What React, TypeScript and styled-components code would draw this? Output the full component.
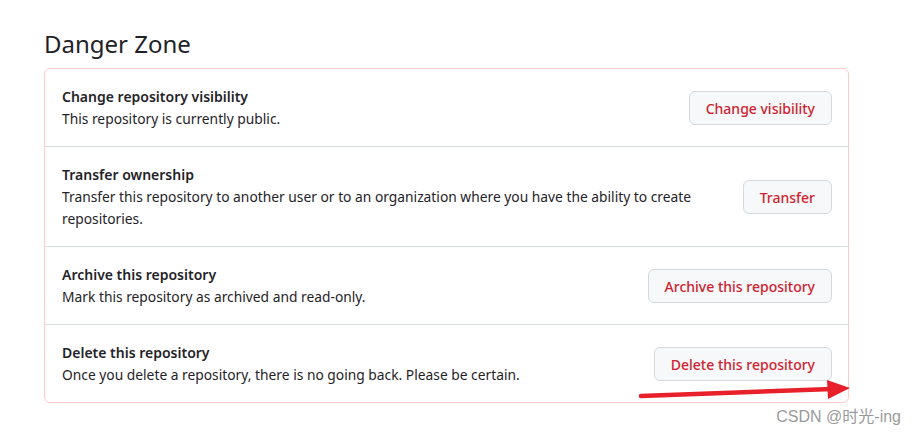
import React from 'react';
import styled, { createGlobalStyle } from 'styled-components';

const GlobalStyle = createGlobalStyle`
  html, body {
    margin: 0;
    background: #ffffff;
    font-family: "Noto Sans", "Liberation Sans", sans-serif;
    color: #1f2328;
  }
`;

const Page = styled.div`
  position: relative;
  width: 915px;
  height: 435px;
  padding: 28px 0 0 44px;
  box-sizing: border-box;
`;

const Heading = styled.h2`
  margin: 0 0 8px;
  font-size: 24px;
  font-weight: 400;
  line-height: 32px;
  color: #1f2328;
`;

const Zone = styled.div`
  width: 805px;
  box-sizing: border-box;
  border: 1px solid #ffc9c9;
  border-radius: 6px;
`;

const Row = styled.div`
  display: flex;
  align-items: center;
  justify-content: space-between;
  gap: 40px;
  padding: 17px 16px 16px 17px;
  & + & {
    border-top: 1px solid #d8dee4;
  }
`;

const Info = styled.div`
  flex: 1;
  min-width: 0;
`;

const Title = styled.div`
  font-size: 14px;
  font-weight: 600;
  line-height: 22px;
`;

const Desc = styled.div`
  font-size: 13.8px;
  line-height: 22px;
`;

const DangerButton = styled.button`
  flex: none;
  height: 34px;
  padding: 0 16px;
  border: 1px solid #d5d9de;
  border-radius: 6px;
  background: #f6f8fa;
  color: #cf222e;
  font-family: inherit;
  font-size: 14px;
  font-weight: 500;
  cursor: pointer;
`;

const Arrow = styled.svg`
  position: absolute;
  left: 636px;
  top: 378px;
`;

const Watermark = styled.div`
  position: absolute;
  right: 14px;
  bottom: 8px;
  font-size: 16px;
  color: #9a9a9a;
  font-family: "Liberation Sans", "Noto Sans CJK SC", sans-serif;
`;

const rows = [
  {
    title: 'Change repository visibility',
    desc: 'This repository is currently public.',
    action: 'Change visibility',
  },
  {
    title: 'Transfer ownership',
    desc: 'Transfer this repository to another user or to an organization where you have the ability to create repositories.',
    action: 'Transfer',
  },
  {
    title: 'Archive this repository',
    desc: 'Mark this repository as archived and read-only.',
    action: 'Archive this repository',
  },
  {
    title: 'Delete this repository',
    desc: 'Once you delete a repository, there is no going back. Please be certain.',
    action: 'Delete this repository',
  },
];

export default function App() {
  return (
    <>
      <GlobalStyle />
      <Page>
        <Heading>Danger Zone</Heading>
        <Zone>
          {rows.map(r => (
            <Row key={r.title}>
              <Info>
                <Title>{r.title}</Title>
                <Desc>{r.desc}</Desc>
              </Info>
              <DangerButton>{r.action}</DangerButton>
            </Row>
          ))}
        </Zone>
        <Arrow width="220" height="26" viewBox="0 0 220 26">
          <path d="M5 18 L196 11" stroke="#e8202a" strokeWidth="4.5" strokeLinecap="round" fill="none" />
          <path d="M191 2 L214 10 L192 21 Z" fill="#e8202a" />
        </Arrow>
        <Watermark>CSDN @时光-ing</Watermark>
      </Page>
    </>
  );
}
